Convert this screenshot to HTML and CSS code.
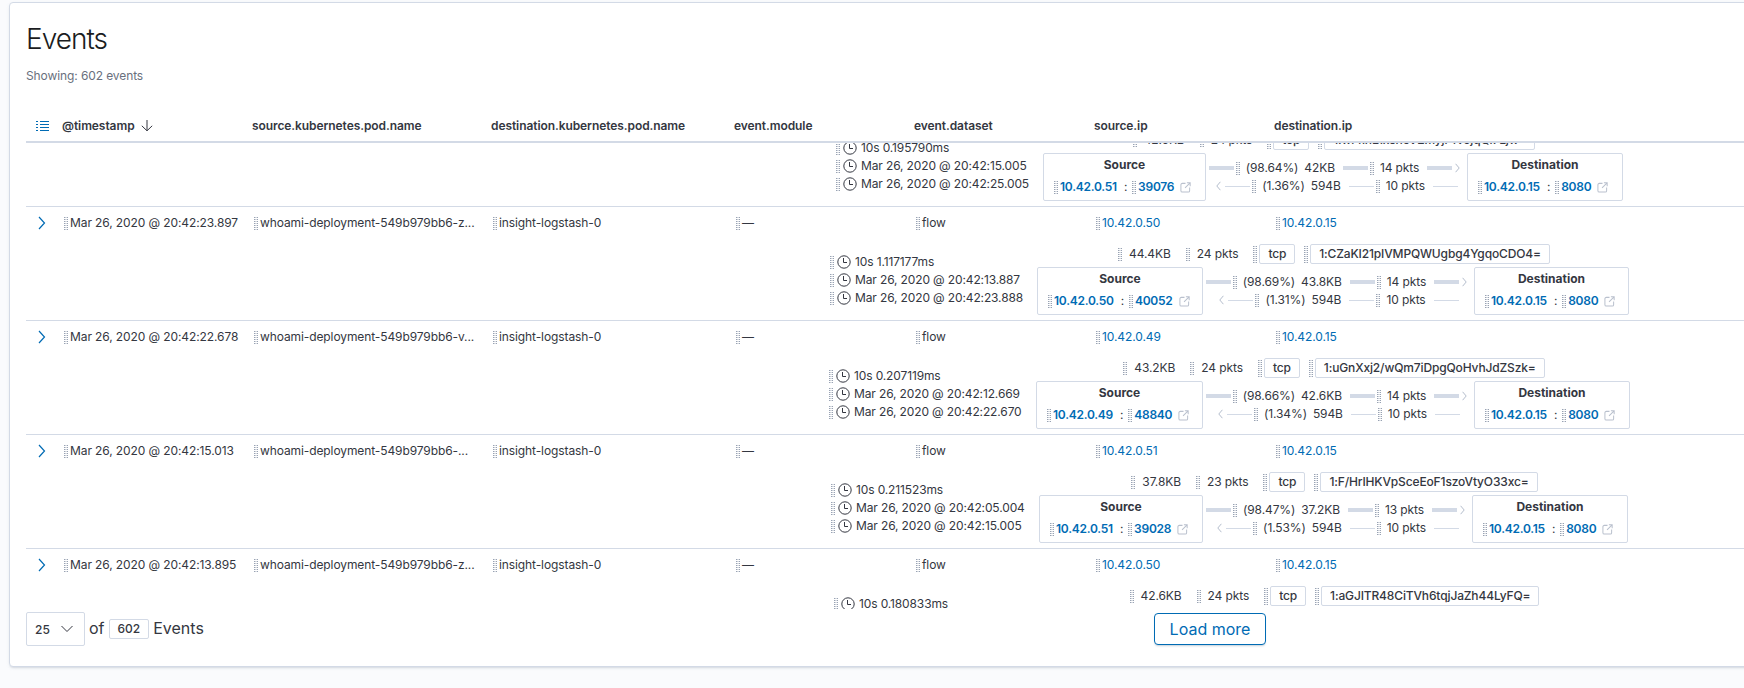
FILE: index.html
```html
<!DOCTYPE html>
<html lang="en">
<head>
<meta charset="utf-8">
<title>Events</title>
<link rel="stylesheet" href="styles.css">
</head>
<body>
<svg class="sprite" aria-hidden="true">
  <symbol id="clock" viewBox="0 0 14 14"><circle cx="7" cy="7" r="6.2" fill="none" stroke="currentColor"/><path d="M6.5 3v4.5H10" fill="none" stroke="currentColor"/></symbol>
  <symbol id="popout" viewBox="0 0 12 12"><path d="M6 1.500H2.500a1.500 1.500 0 0 0-1.500 1.500v6.500A1.500 1.500 0 0 0 2.500 11h6.500a1.500 1.500 0 0 0 1.500-1.500V6M7.500.9h3.600V4.500M11 1 5.500 6.500" fill="none" stroke="currentColor" stroke-width="1.100"/></symbol>
  <symbol id="chevron" viewBox="0 0 8 14"><path d="m1 1 5.500 6L1 13" fill="none" stroke="currentColor" stroke-width="1.200"/></symbol>
  <symbol id="right" viewBox="0 0 5 10"><path d="M.6.800 4.200 5 .6 9.200" fill="none" stroke="currentColor"/></symbol>
  <symbol id="left" viewBox="0 0 5 10"><path d="M4.400.800.800 5l3.600 4.200" fill="none" stroke="currentColor"/></symbol>
</svg>
<main class="panel">
  <h1 class="title">Events</h1>
  <p class="subtitle">Showing: 602 events</p>
  <div class="columns header">
    <svg class="fields" viewBox="0 0 13 11"><path d="M0 .5h2M4 .5h9M0 3.500h2M4 3.500h9M0 6.500h2M4 6.500h9M0 9.500h2M4 9.500h9" stroke="currentColor"/></svg>
    <span class="sorted">@timestamp <svg class="arrow" viewBox="0 0 12 12"><path d="M6 0v10.500M.8 5.800 6 10.800l5.200-5" fill="none" stroke="currentColor"/></svg></span>
    <span>source.kubernetes.pod.name</span>
    <span>destination.kubernetes.pod.name</span>
    <span>event.module</span>
    <span>event.dataset</span>
    <span>source.ip</span>
    <span>destination.ip</span>
  </div>
  <div class="viewport">
    <section class="event first">
      <div class="columns values"></div>
      <div class="flow" style="padding-left:810px">
        <div class="times" style="width:207px">
          <div><i class="grip"></i><svg><use href="#clock"/></svg><span>10s 0.195790ms</span></div>
          <div><i class="grip"></i><svg><use href="#clock"/></svg><span>Mar 26, 2020 @ 20:42:15.005</span></div>
          <div><i class="grip"></i><svg><use href="#clock"/></svg><span>Mar 26, 2020 @ 20:42:25.005</span></div>
        </div>
        <div class="network">
          <div class="summary"><i class="grip"></i><span>42.6KB</span><i class="grip"></i><span>24 pkts</span><i class="grip tall"></i><b class="badge">tcp</b><i class="grip tall"></i><b class="badge">1:wi4lnBIxshcV2myjr4vojqQi7Ljw=</b></div>
          <div class="hosts">
            <div class="host" style="width:163px"><strong>Source</strong><p><i class="grip"></i><a>10.42.0.51</a><em>:</em><i class="grip"></i><a>39076</a><svg><use href="#popout"/></svg></p></div>
            <div class="lanes" style="width:261px">
              <div class="lane"><u></u><i class="grip"></i><span>(98.64%)&ensp;42KB</span><u></u><i class="grip"></i><span>14 pkts</span><u></u><svg><use href="#right"/></svg></div>
              <div class="lane back"><svg><use href="#left"/></svg><u></u><i class="grip"></i><span>(1.36%)&ensp;594B</span><u></u><i class="grip"></i><span>10 pkts</span><u></u></div>
            </div>
            <div class="host" style="width:156px"><strong>Destination</strong><p><i class="grip"></i><a>10.42.0.15</a><em>:</em><i class="grip"></i><a>8080</a><svg><use href="#popout"/></svg></p></div>
          </div>
        </div>
      </div>
    </section>
    <section class="event">
      <div class="columns values"><svg class="expand"><use href="#chevron"/></svg><span><i class="grip"></i>Mar 26, 2020 @ 20:42:23.897</span><span><i class="grip"></i>whoami-deployment-549b979bb6-z...</span><span><i class="grip"></i>insight-logstash-0</span><span><i class="grip"></i>—</span><span><i class="grip"></i>flow</span><span><i class="grip"></i><a>10.42.0.50</a></span><span><i class="grip"></i><a>10.42.0.15</a></span></div>
      <div class="flow" style="padding-left:804px">
        <div class="times" style="width:207px">
          <div><i class="grip"></i><svg><use href="#clock"/></svg><span>10s 1.117177ms</span></div>
          <div><i class="grip"></i><svg><use href="#clock"/></svg><span>Mar 26, 2020 @ 20:42:13.887</span></div>
          <div><i class="grip"></i><svg><use href="#clock"/></svg><span>Mar 26, 2020 @ 20:42:23.888</span></div>
        </div>
        <div class="network">
          <div class="summary"><i class="grip"></i><span>44.4KB</span><i class="grip"></i><span>24 pkts</span><i class="grip tall"></i><b class="badge">tcp</b><i class="grip tall"></i><b class="badge">1:CZaKI21pIVMPQWUgbg4YgqoCDO4=</b></div>
          <div class="hosts">
            <div class="host" style="width:166px"><strong>Source</strong><p><i class="grip"></i><a>10.42.0.50</a><em>:</em><i class="grip"></i><a>40052</a><svg><use href="#popout"/></svg></p></div>
            <div class="lanes" style="width:271px">
              <div class="lane"><u></u><i class="grip"></i><span>(98.69%)&ensp;43.8KB</span><u></u><i class="grip"></i><span>14 pkts</span><u></u><svg><use href="#right"/></svg></div>
              <div class="lane back"><svg><use href="#left"/></svg><u></u><i class="grip"></i><span>(1.31%)&ensp;594B</span><u></u><i class="grip"></i><span>10 pkts</span><u></u></div>
            </div>
            <div class="host" style="width:155px"><strong>Destination</strong><p><i class="grip"></i><a>10.42.0.15</a><em>:</em><i class="grip"></i><a>8080</a><svg><use href="#popout"/></svg></p></div>
          </div>
        </div>
      </div>
    </section>
    <section class="event">
      <div class="columns values"><svg class="expand"><use href="#chevron"/></svg><span><i class="grip"></i>Mar 26, 2020 @ 20:42:22.678</span><span><i class="grip"></i>whoami-deployment-549b979bb6-v...</span><span><i class="grip"></i>insight-logstash-0</span><span><i class="grip"></i>—</span><span><i class="grip"></i>flow</span><span><i class="grip"></i><a>10.42.0.49</a></span><span><i class="grip"></i><a>10.42.0.15</a></span></div>
      <div class="flow" style="padding-left:803px">
        <div class="times" style="width:207px">
          <div><i class="grip"></i><svg><use href="#clock"/></svg><span>10s 0.207119ms</span></div>
          <div><i class="grip"></i><svg><use href="#clock"/></svg><span>Mar 26, 2020 @ 20:42:12.669</span></div>
          <div><i class="grip"></i><svg><use href="#clock"/></svg><span>Mar 26, 2020 @ 20:42:22.670</span></div>
        </div>
        <div class="network">
          <div class="summary"><i class="grip"></i><span>43.2KB</span><i class="grip"></i><span>24 pkts</span><i class="grip tall"></i><b class="badge">tcp</b><i class="grip tall"></i><b class="badge">1:uGnXxj2/wQm7iDpgQoHvhJdZSzk=</b></div>
          <div class="hosts">
            <div class="host" style="width:167px"><strong>Source</strong><p><i class="grip"></i><a>10.42.0.49</a><em>:</em><i class="grip"></i><a>48840</a><svg><use href="#popout"/></svg></p></div>
            <div class="lanes" style="width:271px">
              <div class="lane"><u></u><i class="grip"></i><span>(98.66%)&ensp;42.6KB</span><u></u><i class="grip"></i><span>14 pkts</span><u></u><svg><use href="#right"/></svg></div>
              <div class="lane back"><svg><use href="#left"/></svg><u></u><i class="grip"></i><span>(1.34%)&ensp;594B</span><u></u><i class="grip"></i><span>10 pkts</span><u></u></div>
            </div>
            <div class="host" style="width:156px"><strong>Destination</strong><p><i class="grip"></i><a>10.42.0.15</a><em>:</em><i class="grip"></i><a>8080</a><svg><use href="#popout"/></svg></p></div>
          </div>
        </div>
      </div>
    </section>
    <section class="event">
      <div class="columns values"><svg class="expand"><use href="#chevron"/></svg><span><i class="grip"></i>Mar 26, 2020 @ 20:42:15.013</span><span><i class="grip"></i>whoami-deployment-549b979bb6-...</span><span><i class="grip"></i>insight-logstash-0</span><span><i class="grip"></i>—</span><span><i class="grip"></i>flow</span><span><i class="grip"></i><a>10.42.0.51</a></span><span><i class="grip"></i><a>10.42.0.15</a></span></div>
      <div class="flow" style="padding-left:805px">
        <div class="times" style="width:208px">
          <div><i class="grip"></i><svg><use href="#clock"/></svg><span>10s 0.211523ms</span></div>
          <div><i class="grip"></i><svg><use href="#clock"/></svg><span>Mar 26, 2020 @ 20:42:05.004</span></div>
          <div><i class="grip"></i><svg><use href="#clock"/></svg><span>Mar 26, 2020 @ 20:42:15.005</span></div>
        </div>
        <div class="network">
          <div class="summary"><i class="grip"></i><span>37.8KB</span><i class="grip"></i><span>23 pkts</span><i class="grip tall"></i><b class="badge">tcp</b><i class="grip tall"></i><b class="badge">1:F/HrIHKVpSceEoF1szoVtyO33xc=</b></div>
          <div class="hosts">
            <div class="host" style="width:164px"><strong>Source</strong><p><i class="grip"></i><a>10.42.0.51</a><em>:</em><i class="grip"></i><a>39028</a><svg><use href="#popout"/></svg></p></div>
            <div class="lanes" style="width:269px">
              <div class="lane"><u></u><i class="grip"></i><span>(98.47%)&ensp;37.2KB</span><u></u><i class="grip"></i><span>13 pkts</span><u></u><svg><use href="#right"/></svg></div>
              <div class="lane back"><svg><use href="#left"/></svg><u></u><i class="grip"></i><span>(1.53%)&ensp;594B</span><u></u><i class="grip"></i><span>10 pkts</span><u></u></div>
            </div>
            <div class="host" style="width:156px"><strong>Destination</strong><p><i class="grip"></i><a>10.42.0.15</a><em>:</em><i class="grip"></i><a>8080</a><svg><use href="#popout"/></svg></p></div>
          </div>
        </div>
      </div>
    </section>
    <section class="event">
      <div class="columns values"><svg class="expand"><use href="#chevron"/></svg><span><i class="grip"></i>Mar 26, 2020 @ 20:42:13.895</span><span><i class="grip"></i>whoami-deployment-549b979bb6-z...</span><span><i class="grip"></i>insight-logstash-0</span><span><i class="grip"></i>—</span><span><i class="grip"></i>flow</span><span><i class="grip"></i><a>10.42.0.50</a></span><span><i class="grip"></i><a>10.42.0.15</a></span></div>
      <div class="flow" style="padding-left:808px">
        <div class="times" style="width:207px">
          <div><i class="grip"></i><svg><use href="#clock"/></svg><span>10s 0.180833ms</span></div>
        </div>
        <div class="network" style="width:585px">
          <div class="summary"><i class="grip"></i><span>42.6KB</span><i class="grip"></i><span>24 pkts</span><i class="grip tall"></i><b class="badge">tcp</b><i class="grip tall"></i><b class="badge">1:aGJITR48CiTVh6tqjJaZh44LyFQ=</b></div>
        </div>
      </div>
    </section>
  </div>
  <footer class="footer">
    <div class="count"><button class="select">25<svg viewBox="0 0 12 8"><path d="m.5 1 5.500 5.500L11.500 1" fill="none" stroke="currentColor"/></svg></button><span>of</span><b class="badge total">602</b><span>Events</span></div>
    <button class="more">Load more</button>
  </footer>
</main>
</body>
</html>
```

FILE: styles.css
```css
* { box-sizing: border-box; }
body { margin: 0; height: 688px; overflow: hidden; background: #fafbfd; color: #343741; font-family: Inter, sans-serif; font-size: 12px; line-height: 18px; letter-spacing: -.1px; }
.sprite { display: none; }
svg { flex: none; display: block; }
a { color: #006bb4; }
.panel { margin: 2px 0 0 9px; width: 1760px; height: 665px; padding: 0 16px; background: #fff; border: 1px solid #d3dae6; border-radius: 4px; box-shadow: 0 2px 2px -1px rgba(152,162,179,.3), 0 1px 5px -2px rgba(152,162,179,.3); }
.title { margin: 16px 0 0; font-size: 28px; line-height: 40px; font-weight: 300; letter-spacing: -1px; color: #1a1c21; }
.subtitle { margin: 8px 0 0; color: #69707d; }
.columns { display: grid; grid-template-columns: 36px 190px 239px 243px 180px 180px 180px 300px; align-items: center; }
.header { height: 58px; padding-top: 26px; border-bottom: 2px solid #d3dae6; font-weight: 600; letter-spacing: -.08px; }
.fields { width: 13px; height: 11px; margin-left: 10px; color: #006bb4; }
.sorted { display: flex; align-items: center; gap: 6px; }
.arrow { width: 12px; height: 12px; }
.viewport { height: 466px; overflow: hidden; }
.event { height: 114px; border-bottom: 1px solid #d3dae6; }
.first { margin-top: -50px; }
.values { height: 32px; }
.values span { display: flex; align-items: center; padding-left: 2px; white-space: nowrap; }
.values .grip { margin-right: 2px; }
.expand { width: 8px; height: 14px; margin-left: 12px; color: #006bb4; }
.grip { flex: none; width: 4px; height: 13px; background: repeating-linear-gradient(transparent 0 1px, #fff 1px 2px), linear-gradient(90deg, #98a2b3 0 1px, #ccd1d9 1px 2px, #d8dce2 2px 3px, #98a2b3 3px 4px); }
.tall { height: 17px; }
.flow { display: flex; align-items: flex-start; white-space: nowrap; }
.times { padding-top: 14px; letter-spacing: -.13px; }
.times > div { display: flex; align-items: center; height: 18px; }
.times svg { width: 14px; height: 14px; margin: 0 4px 0 3px; }
.summary { display: flex; align-items: center; justify-content: center; height: 28px; padding: 2px 0 0 2px; }
.summary span { margin: 0 15px 0 7px; }
.badge { height: 20px; padding: 0 8px; border: 1px solid #d3dae6; border-radius: 2px; font-weight: 500; letter-spacing: -.14px; }
.summary .badge { margin: 0 9px 0 2px; }
.summary .badge:last-child { margin-right: 0; }
.hosts { display: flex; }
.host { flex: none; height: 48px; border: 1px solid #d3dae6; border-radius: 2px; padding: 1px 10px 0; }
.host strong { display: block; text-align: center; font-weight: 700; line-height: 19px; letter-spacing: 0; }
.host p { display: flex; align-items: center; margin: 4px 0 0; height: 18px; font-weight: 600; letter-spacing: -.25px; }
.host p a { margin-left: 2px; }
.host em { font-style: normal; font-weight: 400; margin: 0 5px 0 7px; }
.host svg { width: 11px; height: 11px; margin-left: 6px; color: #b9c0cd; }
.lanes { flex: none; padding-top: 6px; }
.lane { display: flex; align-items: center; justify-content: center; height: 18px; }
.lane u { flex: none; width: 25px; height: 4px; background: #d3dae6; }
.lane .grip { margin-left: 2px; }
.lane span { margin: 0 8px 0 6px; }
.lane svg { width: 5px; height: 10px; margin: 0 4px 0 3px; color: #b4bdcc; }
.back { padding-right: 2px; }
.back u { height: 1px; }
.footer { display: grid; grid-template-columns: 1128px auto; align-items: start; padding-top: 3px; letter-spacing: 0; }
.count { display: flex; align-items: center; font-size: 16px; line-height: 30px; gap: 4px; }
.count span { padding-bottom: 2px; }
.select { display: flex; align-items: center; justify-content: space-between; width: 59px; height: 34px; padding: 0 11px 0 8px; border: 1px solid #d3dae6; border-radius: 2px; background: #fff; font: 500 12px Inter, sans-serif; color: #343741; }
.select svg { width: 12px; height: 8px; }
.total { font-size: 12px; line-height: 18px; letter-spacing: 0; }
.more { width: 112px; height: 32px; margin-top: 1px; padding: 0; border: 1px solid #006bb4; border-radius: 4px; background: #fff; color: #006bb4; font: 16px Inter, sans-serif; box-shadow: 0 2px 2px -1px rgba(54,97,126,.3); }
```
